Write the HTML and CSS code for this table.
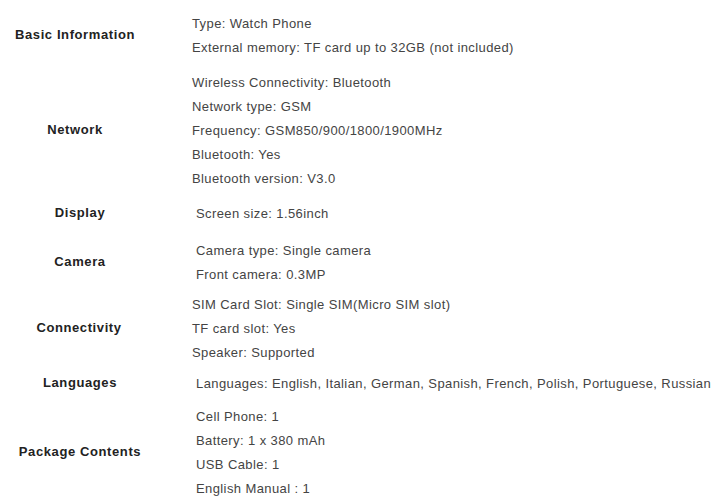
FILE: index.html
```html
<!DOCTYPE html>
<html lang="en">
<head>
    <meta charset="UTF-8">
    <title>Specifications</title>
    <link rel="stylesheet" href="styles.css">
</head>
<body>
    <div class="specs">
        <div class="row">
            <div class="label">Basic Information</div>
            <div class="values">
                <p>Type: Watch Phone</p>
                <p>External memory: TF card up to 32GB (not included)</p>
            </div>
        </div>
        <div class="row">
            <div class="label">Network</div>
            <div class="values">
                <p>Wireless Connectivity: Bluetooth</p>
                <p>Network type: GSM</p>
                <p>Frequency: GSM850/900/1800/1900MHz</p>
                <p>Bluetooth: Yes</p>
                <p>Bluetooth version: V3.0</p>
            </div>
        </div>
        <div class="row wide">
            <div class="label">Display</div>
            <div class="values">
                <p>Screen size: 1.56inch</p>
            </div>
        </div>
        <div class="row wide loose">
            <div class="label">Camera</div>
            <div class="values">
                <p>Camera type: Single camera</p>
                <p>Front camera: 0.3MP</p>
            </div>
        </div>
        <div class="row tight mid">
            <div class="label">Connectivity</div>
            <div class="values">
                <p>SIM Card Slot: Single SIM(Micro SIM slot)</p>
                <p>TF card slot: Yes</p>
                <p>Speaker: Supported</p>
            </div>
        </div>
        <div class="row compact wide">
            <div class="label">Languages</div>
            <div class="values">
                <p>Languages: English, Italian, German, Spanish, French, Polish, Portuguese, Russian</p>
            </div>
        </div>
        <div class="row spaced wide">
            <div class="label">Package Contents</div>
            <div class="values">
                <p>Cell Phone: 1</p>
                <p>Battery: 1 x 380 mAh</p>
                <p>USB Cable: 1</p>
                <p>English Manual : 1</p>
            </div>
        </div>
    </div>
</body>
</html>
```

FILE: styles.css
```css
* {
    box-sizing: border-box;
    margin: 0;
    padding: 0;
}
body {
    font-family: 'Liberation Sans', Arial, sans-serif;
    font-size: 13px;
    letter-spacing: 0.4px;
    background-color: #ffffff;
    color: #444444;
}
.specs {
    padding-top: 12px;
}
.row {
    display: flex;
    align-items: center;
    margin-top: 11px;
}
.row:first-child {
    margin-top: 0;
}
.row.loose {
    margin-top: 13px;
}
.row.tight {
    margin-top: 6px;
}
.row.compact {
    margin-top: 7px;
}
.row.spaced {
    margin-top: 9px;
}
.label {
    width: 150px;
    flex-shrink: 0;
    padding-bottom: 3px;
    text-align: center;
    font-weight: bold;
    letter-spacing: 0.6px;
    color: #222222;
}
.values {
    padding-left: 42px;
    white-space: nowrap;
}
.values p {
    line-height: 24px;
}
.row.wide .label {
    width: 160px;
}
.row.wide .values {
    padding-left: 36px;
}
.row.mid .label {
    width: 158px;
}
.row.mid .values {
    padding-left: 34px;
}
```
